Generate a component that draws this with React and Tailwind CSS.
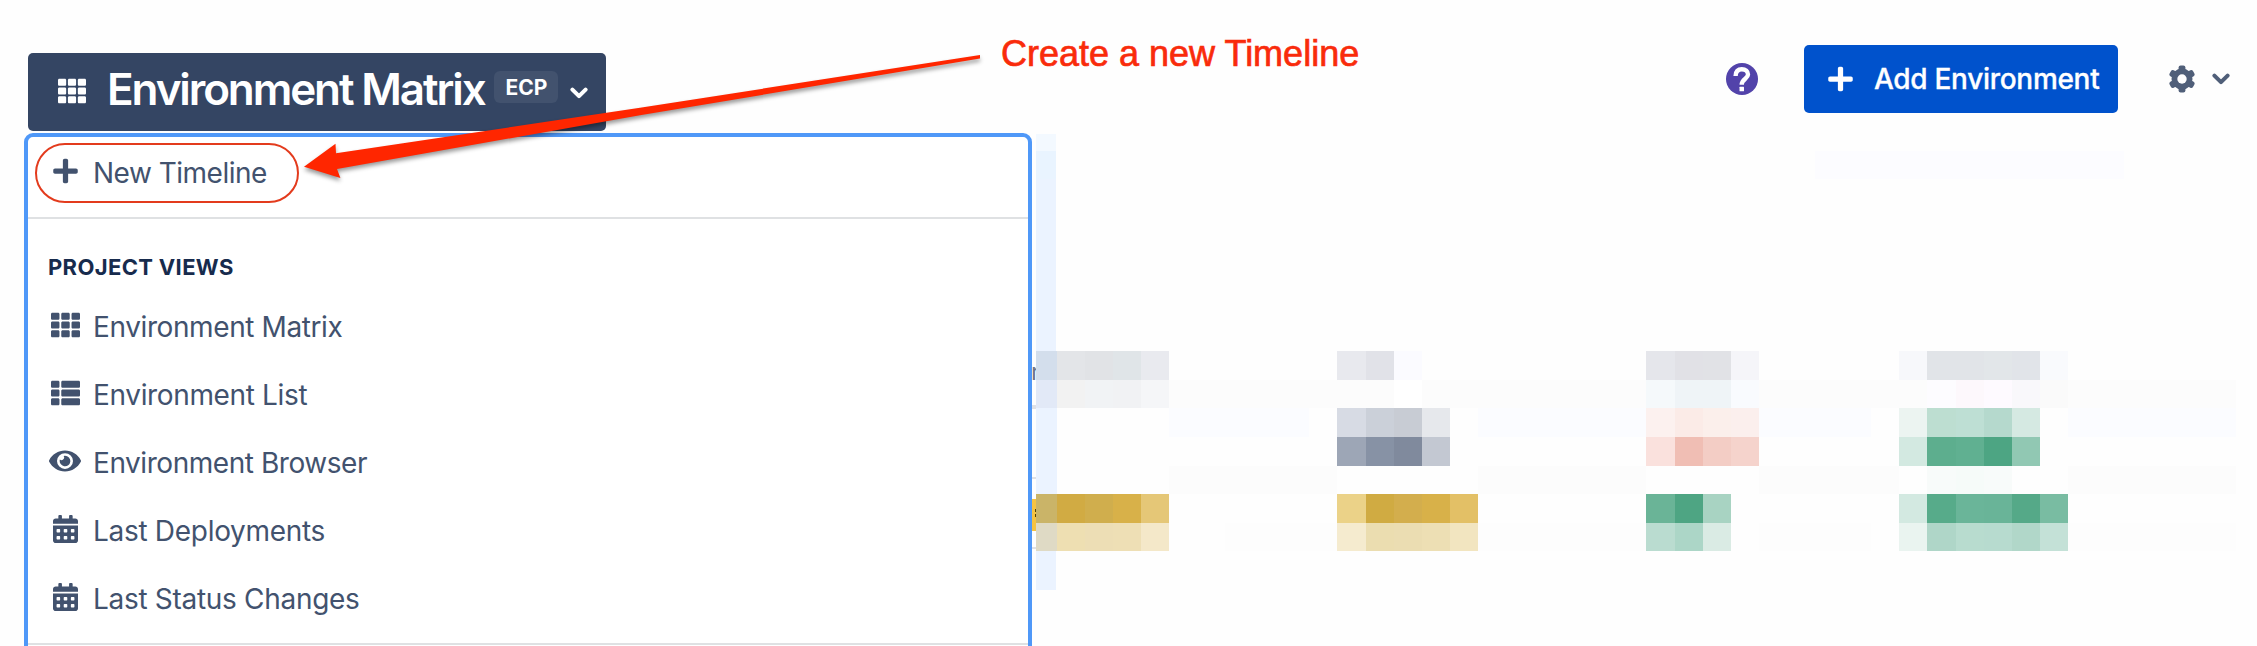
import React from 'react';
import { FaTh, FaThList, FaEye, FaCalendarAlt, FaPlus } from 'react-icons/fa';

const VIEWS = [
  { label: 'Environment Matrix', Icon: FaTh, size: 'w-[29px] h-[28px]', track: 'tracking-[-0.400px]' },
  { label: 'Environment List', Icon: FaThList, size: 'w-[29px] h-[28px]', track: 'tracking-[-0.350px]' },
  { label: 'Environment Browser', Icon: FaEye, size: 'w-[32px] h-[28px]', track: 'tracking-[-0.450px]' },
  { label: 'Last Deployments', Icon: FaCalendarAlt, size: 'w-[25px] h-[28px]', track: 'tracking-[-0.300px]' },
  { label: 'Last Status Changes', Icon: FaCalendarAlt, size: 'w-[25px] h-[28px]', track: 'tracking-[-0.300px]' },
];

// Each row: base fills [from, to, colour], then tiles [first column, ...colours]
const MOSAIC = [
  {
    base: [],
    tiles: [
      [0, '#d3deec', '#e3e5e8', '#e1e3e6', '#e0e5e8', '#e9eaef'],
      [11, '#e8e9ee', '#e1e2e8', '#fbfbff'],
      [22, '#e5e6eb', '#e1e1e6', '#e1e2e6', '#f5f5f9'],
      [31, '#f7f8fb', '#e1e4e8', '#e1e4e8', '#e2e6e9', '#e1e4e9', '#f9fafd'],
    ],
  },
  {
    base: [[5, 43, '#fcfcfc']],
    tiles: [
      [0, '#e2e9f7', '#f2f2f2', '#f1f3f5', '#f1f2f4', '#f5f6f8'],
      [13, '#ffffff'],
      [22, '#f5f9fb', '#eff4f7', '#eff4f7', '#f9fbfe'],
      [32, '#fdfcff', '#fdf8fc', '#fefaff', '#f9f8fb', '#fafafa'],
    ],
  },
  {
    base: [[5, 10, '#fbfcff'], [16, 22, '#fbfcff'], [26, 30, '#fbfcff'], [37, 43, '#fbfcff']],
    tiles: [
      [0, '#ebf3ff'],
      [11, '#d7dbe4', '#cbd0d9', '#c8ccd4', '#e6e8ec'],
      [22, '#fcf1ef', '#fbebe7', '#fbefeb', '#fbefed'],
      [31, '#ecf4f1', '#bdded1', '#bedfd4', '#b5d9cd', '#d5e9e2'],
    ],
  },
  {
    base: [],
    tiles: [
      [0, '#ebf3ff'],
      [11, '#9da6b6', '#8792a5', '#808a9d', '#c3c8d2'],
      [22, '#fae1dd', '#f0beb4', '#f3cdc5', '#f5d3cc'],
      [31, '#d3e9e1', '#5dae8e', '#60b091', '#4da583', '#91c8b3'],
    ],
  },
  {
    base: [[5, 11, '#fcfcfc'], [16, 22, '#fcfcfc'], [26, 31, '#fcfcfc'], [37, 43, '#fcfcfc']],
    tiles: [[0, '#ebf3ff'], [32, '#f8fbfa', '#f6fbf9', '#f8fbfa', '#fefefe']],
  },
  {
    base: [],
    tiles: [
      [0, '#cab468', '#d1ab43', '#d0ae4d', '#d8b149', '#e5c777'],
      [11, '#ebd288', '#d0ab42', '#d3ae4d', '#d8b149', '#e3c066'],
      [22, '#6ab497', '#4ea583', '#a8d3c2'],
      [31, '#d3e9e1', '#57ab8a', '#6ab599', '#69b498', '#55a988', '#79bca2'],
    ],
  },
  {
    base: [[7, 11, '#fdfdfd'], [16, 22, '#fdfdfd'], [26, 30, '#fdfdfd'], [37, 43, '#fdfdfd']],
    tiles: [
      [0, '#dfdac5', '#eedfb2', '#eddeb5', '#eedfb5', '#f4e8c9'],
      [11, '#f5ebcf', '#ebddb0', '#ebddb2', '#eddfb4', '#f2e5c0'],
      [22, '#badcd0', '#acd6c7', '#daebe4'],
      [31, '#eaf4f0', '#afd6c8', '#b8dccf', '#b7dbcf', '#b1d7c9', '#c4e1d7'],
    ],
  },
];

function rowColours({ base, tiles }) {
  const cells = Array(43).fill('transparent');
  base.forEach(([from, to, colour]) => cells.fill(colour, from, to));
  tiles.forEach(([start, ...colours]) => colours.forEach((c, i) => { cells[start + i] = c; }));
  return cells;
}

function Chevron({ className }) {
  return (
    <svg viewBox="0 0 18 12" className={className} fill="none" stroke="currentColor" strokeWidth="4" strokeLinecap="round" strokeLinejoin="round">
      <path d="M2.4 2.6 9 9.2l6.6-6.6" />
    </svg>
  );
}

function Gear() {
  return (
    <svg viewBox="-14 -14 28 28" className="h-7 w-7" fill="currentColor">
      {[0, 60, 120].map((angle) => (
        <rect key={angle} x="-3.400" y="-13.500" width="6.800" height="27" rx="2" transform={`rotate(${angle})`} />
      ))}
      <circle r="7.600" fill="none" stroke="currentColor" strokeWidth="5.800" />
      <circle r="4.700" fill="#fefefe" />
    </svg>
  );
}

function Help() {
  return (
    <svg viewBox="0 0 32 32" className="h-8 w-8">
      <circle cx="16" cy="16" r="16" fill="#5243aa" />
      <path d="M9.600 13C9.600 8.300 12 6.300 15.800 6.300s6.200 2 6.200 5.300c0 4.200-6.300 4.200-6.300 10.200" fill="none" stroke="#fff" strokeWidth="4.400" />
      <rect x="13.500" y="23.800" width="4.500" height="4.500" rx="0.500" fill="#fff" />
    </svg>
  );
}

function Header() {
  return (
    <header className="flex h-[133px] items-start pl-7">
      <button className="mt-[53px] flex h-[78px] w-[578px] items-start rounded-[5px] bg-[#344563] pl-[30px] text-white">
        <FaTh className="mt-6 h-7 w-7" />
        <span className="ml-[21px] mt-[8px] w-[384px] whitespace-nowrap text-left text-[44px] font-semibold leading-[56px] tracking-[-2.100px]">Environment Matrix</span>
        <span className="mt-[18px] ml-[3px] flex h-8 w-16 items-center justify-center rounded-[6px] bg-[#42526e] pt-px pl-px text-[21px] font-bold">ECP</span>
        <Chevron className="ml-3 mt-[34px] h-3 w-[18px]" />
      </button>
      <div className="ml-auto flex pt-[45px] text-[#505f79]">
        <div className="mt-[18px]"><Help /></div>
        <button className="ml-[46px] flex h-[68px] w-[314px] items-center rounded-[5px] bg-[#0052cc] pl-6 text-white">
          <FaPlus className="h-7 w-[25px]" />
          <span className="ml-[21px] whitespace-nowrap text-[28px] font-medium tracking-[-0.300px] [-webkit-text-stroke:0.3px_white]">Add Environment</span>
        </button>
        <button className="ml-[50px] mr-[27px] flex h-[68px] items-center gap-4">
          <Gear />
          <Chevron className="h-3 w-[18px]" />
        </button>
      </div>
    </header>
  );
}

function ViewMenu() {
  return (
    <nav className="h-[530px] w-[1008px] shrink-0 rounded-[9px] border-4 border-[#4f98f8] bg-white text-[28px] text-[#42526e]">
      <div className="flex h-[82px] items-start border-b-2 border-[#dfe1e3] pl-[7px] pt-[5.500px]">
        <div className="flex h-[60px] w-[264px] items-center rounded-full border-2 border-[#e33b1d] pl-4">
          <FaPlus className="-mt-1 h-7 w-[25px]" />
          <span className="ml-[15px] whitespace-nowrap pt-px tracking-[-0.500px]">New Timeline</span>
        </div>
      </div>
      <div className="h-[426px] border-b-2 border-[#dfe1e3] pt-[31px]">
        <h2 className="pl-5 text-[22px] font-bold leading-[34px] tracking-[0.350px] text-[#172b4d]">PROJECT VIEWS</h2>
        <ul className="mt-[9px]">
          {VIEWS.map(({ label, Icon, size, track }) => (
            <li key={label} className="flex h-[68px] items-center pl-[21px]">
              <span className="-mt-1 flex w-8 justify-center"><Icon className={size} preserveAspectRatio="none" /></span>
              <span className={`ml-3 whitespace-nowrap ${track}`}>{label}</span>
            </li>
          ))}
        </ul>
      </div>
    </nav>
  );
}

function TableEdge() {
  return (
    <div className="flex h-[513px] w-1 shrink-0 flex-col overflow-hidden">
      <div className="mt-[222px] h-[50px] text-[24px] leading-[34px] text-[#6b7588]"><span className="-ml-px">r</span></div>
      <div className="h-1 bg-[#dfe1e6]" />
      <div className="mt-[68px] h-0.5 bg-[#dfe1e6]" />
      <div className="mt-5 flex h-8 flex-col items-end gap-0.5 bg-[#f6c342] pt-[10px]">
        <div className="h-[3px] w-px bg-[#594300]" />
        <div className="h-[3px] w-px bg-[#594300]" />
      </div>
      <div className="mt-4 h-0.5 bg-[#dfe1e6]" />
    </div>
  );
}

function Mosaic() {
  return (
    <div className="flex w-[1200px] flex-col pt-px">
      <div className="flex">
        <div className="w-5">
          <div className="h-[17px] bg-[#f3f9ff]" />
          <div className="h-7 bg-[#e9f4ff]" />
          <div className="h-[172px] bg-[#ebf3ff]" />
        </div>
        <div className="ml-[759px] mt-[17px] h-7 w-[309px] bg-[#fcfcff]" />
      </div>
      <div className="grid grid-cols-[20.500px_repeat(42,28.100px)] grid-rows-[repeat(7,28.650px)]">
        {MOSAIC.flatMap((row, r) => rowColours(row).map((colour, c) => (
          <div key={r + '-' + c} style={{ backgroundColor: colour }} />
        )))}
      </div>
      <div className="h-[39px] w-5 bg-[#ebf3ff]" />
    </div>
  );
}

function Callout() {
  return (
    <>
      <svg viewBox="0 0 700 150" className="absolute left-[300px] top-[40px] h-[150px] w-[700px] drop-shadow-[0_3px_2px_rgba(0,0,0,0.4)]">
        <path d="M4 126.700 35.500 103.700 36 113.300 340 67.700 680 15V18.500L340 75.300 37 129 40.400 138Z" fill="#ff2600" />
      </svg>
      <p className="absolute left-[1001px] top-[33px] whitespace-nowrap font-['Liberation_Sans',sans-serif] text-[36px] leading-[42px] text-[#f92b0b] [-webkit-text-stroke:0.7px_#f92b0b]">Create a new Timeline</p>
    </>
  );
}

export default function App() {
  return (
    <main className="relative h-[646px] w-[2257px] overflow-hidden bg-[#fefefe] font-[Inter,sans-serif]">
      <Header />
      <div className="flex items-start pl-6">
        <ViewMenu />
        <TableEdge />
        <Mosaic />
      </div>
      <Callout />
    </main>
  );
}
